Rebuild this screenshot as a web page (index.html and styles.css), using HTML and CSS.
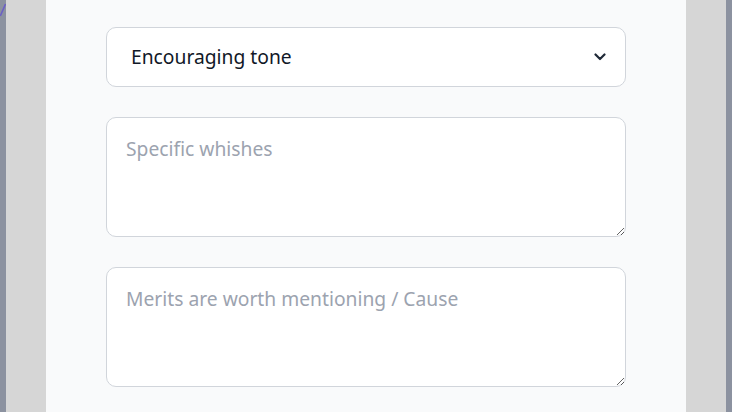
FILE: index.html
```html
<!DOCTYPE html>
<html lang="en">
<head>
<meta charset="utf-8">
<title>Form</title>
<link rel="stylesheet" href="styles.css">
</head>
<body>
<div class="page">
  <div class="edge edge-left">
    <svg class="edge-mark" width="6" height="16" viewBox="0 0 6 16"><path d="M0.3 13 L5.5 1" stroke="#6b5fc7" stroke-width="1.6" fill="none"/></svg>
  </div>
  <div class="gutter"></div>
  <main class="panel">
    <div class="select-wrap">
      <select class="field select">
        <option>Encouraging tone</option>
      </select>
      <svg class="chevron" width="12" height="8" viewBox="0 0 12 8"><path d="M1.5 1.5 L6 6 L10.5 1.5" stroke="#1f2937" stroke-width="2.2" fill="none" stroke-linecap="round" stroke-linejoin="round"/></svg>
    </div>
    <textarea class="field area" placeholder="Specific whishes"></textarea>
    <textarea class="field area" placeholder="Merits are worth mentioning / Cause"></textarea>
  </main>
  <div class="gutter"></div>
  <div class="edge"></div>
</div>
</body>
</html>
```

FILE: styles.css
```css
html, body {
  margin: 0;
  padding: 0;
  height: 100%;
  overflow: hidden;
}
body {
  font-family: "Noto Sans", "Open Sans", sans-serif;
  background: #d6d6d6;
}
.page {
  display: flex;
  height: 412px;
}
.edge {
  width: 6px;
  background: #8c92a0;
  flex: none;
}
.edge-left {
  display: flex;
  align-items: flex-start;
  padding-top: 3px;
  box-sizing: border-box;
}
.edge-mark {
  display: block;
}
.gutter {
  width: 40px;
  flex: none;
  background: #d6d6d6;
}
.panel {
  width: 640px;
  flex: none;
  background: #f9fafb;
  box-sizing: border-box;
  padding: 27px 60px 0;
  display: flex;
  flex-direction: column;
  gap: 30px;
}
.field {
  display: block;
  width: 520px;
  box-sizing: border-box;
  border: 1px solid #d1d5db;
  border-radius: 10px;
  background: #ffffff;
  font-family: inherit;
  font-size: 19.25px;
  margin: 0;
  outline: none;
}
.select-wrap {
  position: relative;
  width: 520px;
}
.select {
  height: 60px;
  padding: 0 50px 1px 24px;
  color: #111827;
  appearance: none;
  -webkit-appearance: none;
}
.chevron {
  position: absolute;
  right: 20px;
  top: 26px;
}
.area {
  height: 120px;
  padding: 17px 19px 18px;
  color: #111827;
  resize: vertical;
}
.area::placeholder {
  color: #9ca3af;
}
```
